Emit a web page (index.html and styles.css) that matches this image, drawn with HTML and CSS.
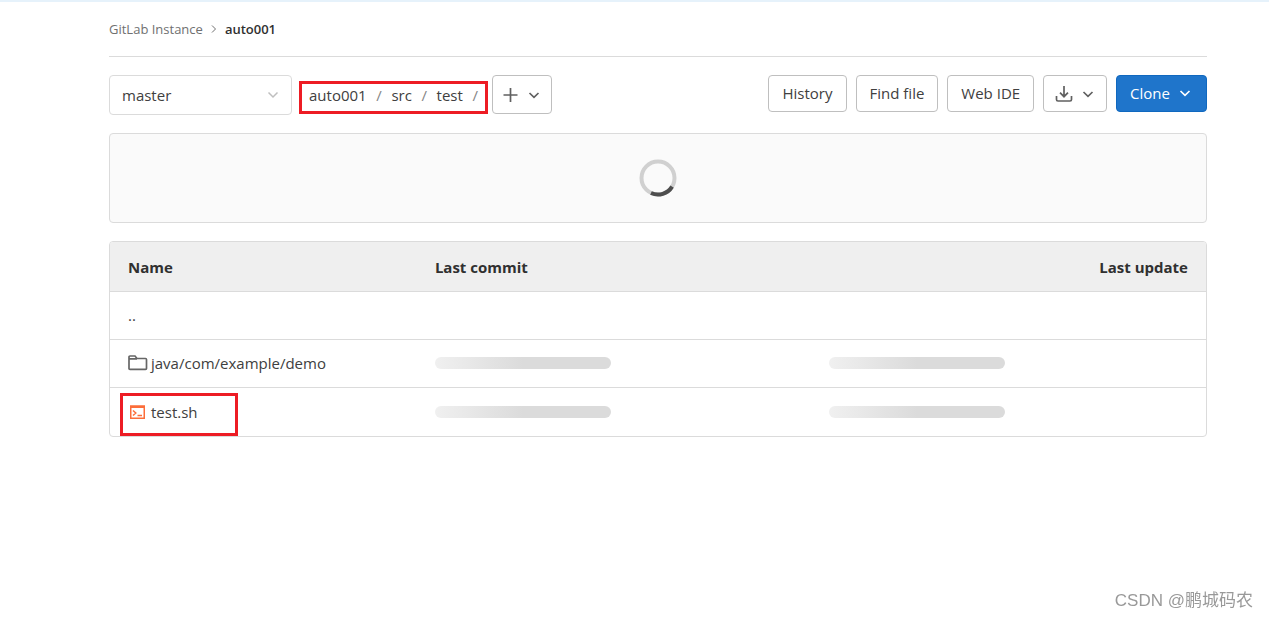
FILE: index.html
```html
<!DOCTYPE html>
<html lang="en">
<head>
<meta charset="utf-8">
<title>auto001 · GitLab</title>
<link rel="stylesheet" href="styles.css">
</head>
<body>
<main class="page">
  <nav class="breadcrumbs" aria-label="Breadcrumbs">
    <a href="#">GitLab Instance</a>
    <svg class="crumb-sep" viewBox="0 0 8 10" width="8" height="10"><path d="M2 1.5 5.5 5 2 8.500"/></svg>
    <a class="current" href="#">auto001</a>
  </nav>

  <div class="toolbar">
    <div class="branch">
      <select aria-label="Branch"><option>master</option></select>
      <svg class="chevron" viewBox="0 0 12 12" width="12" height="12"><path d="M1.500 3.500 6 8l4.500-4.500"/></svg>
    </div>
    <nav class="path" aria-label="Path">
      <a href="#">auto001</a><span>/</span><a href="#">src</a><span>/</span><a href="#">test</a><span>/</span>
    </nav>
    <button class="btn add" type="button" aria-label="Add to tree">
      <svg viewBox="0 0 16 16" width="16" height="16"><path d="M7.500 1v14M.5 8h14"/></svg>
      <svg viewBox="0 0 12 12" width="12" height="12"><path d="M1.500 4 6 8.300 10.500 4"/></svg>
    </button>
    <div class="actions">
      <button class="btn" type="button">History</button>
      <button class="btn" type="button">Find file</button>
      <button class="btn" type="button">Web IDE</button>
      <button class="btn download" type="button" aria-label="Download">
        <svg viewBox="0 0 18 18" width="18" height="18"><path d="M9 1v10.500M5 7.700l4 4 4-4M1.500 11V14.500a1.500 1.500 0 0 0 1.500 1.500h12a1.500 1.500 0 0 0 1.500-1.500V11"/></svg>
        <svg viewBox="0 0 12 12" width="12" height="12"><path d="M1.500 4 6 8.300 10.500 4"/></svg>
      </button>
      <button class="btn primary" type="button">Clone
        <svg viewBox="0 0 12 12" width="12" height="12"><path d="M1.500 4 6 8.300 10.500 4"/></svg>
      </button>
    </div>
  </div>

  <section class="commit-panel" aria-label="Loading">
    <svg viewBox="0 0 38 38" width="38" height="38">
      <circle class="ring" cx="19" cy="19" r="16.500"/>
      <path class="arc" d="M33.100 27.600A16.500 16.500 0 0 1 12 34"/>
    </svg>
  </section>

  <div class="tree">
    <table>
      <thead>
        <tr><th class="col-name">Name</th><th class="col-commit">Last commit</th><th class="col-update">Last update</th></tr>
      </thead>
      <tbody>
        <tr><td><a href="#">..</a></td><td></td><td></td></tr>
        <tr>
          <td><a class="entry" href="#"><svg class="folder" viewBox="0 0 20 16" width="20" height="16"><path d="M1 13.500V2Q1 1 2 1H7L9 3.500H17.500Q18.500 3.500 18.500 4.500V13.500Q18.500 14.300 17.500 14.300H2Q1 14.300 1 13.500ZM1 3.800H9"/></svg>java/com/example/demo</a></td>
          <td><div class="skeleton"></div></td><td><div class="skeleton"></div></td>
        </tr>
        <tr>
          <td><a class="entry marked" href="#"><svg class="shell" viewBox="0 0 20 16" width="20" height="16"><path d="M2.750 2H16.250V14.250H2.750ZM2.750 3.250H16.250M5 6.500 7.800 9 5 11.500M9.500 11.500H14"/></svg>test.sh</a></td>
          <td><div class="skeleton"></div></td><td><div class="skeleton"></div></td>
        </tr>
      </tbody>
    </table>
  </div>
</main>
<div class="watermark">CSDN @鹏城码农</div>
</body>
</html>
```
FILE: styles.css
```css
*, *::after { box-sizing: border-box; }

body {
  margin: 0;
  min-height: 100vh;
  border-top: 2px solid #e6f2fb;
  background: #fff;
  color: #404040;
  font: 15px/24px "Open Sans", "Noto Sans", sans-serif;
}

a { color: inherit; text-decoration: none; }
svg { flex: none; fill: none; stroke: currentColor; stroke-width: 1.7; }

.page { padding: 0 62px 0 109px; }

.breadcrumbs {
  display: flex;
  align-items: center;
  gap: 7px;
  height: 55px;
  border-bottom: 1px solid #dbdbdb;
  color: #707070;
  font-size: 13px;
}
.crumb-sep { stroke-width: 1; }
.current { color: #303030; font-weight: 600; }

.toolbar {
  display: flex;
  align-items: flex-start;
  margin: 18px 0;
}

.branch { position: relative; width: 183px; margin-right: 7px; }
.branch select {
  appearance: none;
  width: 100%;
  height: 40px;
  padding: 0 12px;
  border: 1px solid #dbdbdb;
  border-radius: 4px;
  background: #fff;
  color: #404040;
  font: inherit;
}
.chevron {
  position: absolute;
  top: 14px;
  right: 13px;
  color: #bfbfbf;
  stroke-width: 1.500;
  pointer-events: none;
}

.path {
  display: flex;
  justify-content: space-between;
  align-items: center;
  width: 189px;
  height: 33px;
  margin: 6px 4px 0 0;
  padding: 0 7px 6px 7px;
  border: 3px solid #ed1c24;
}
.path span { color: #868686; }

.btn {
  display: flex;
  align-items: center;
  justify-content: center;
  gap: 9px;
  height: 37px;
  padding: 0 13px 2px;
  border: 1px solid #bfbfbf;
  border-radius: 4px;
  background: #fff;
  color: #404040;
  font: inherit;
  white-space: nowrap;
}
.btn svg { color: #606060; }
.add { height: 39px; width: 60px; padding: 0 2px 0 0; }
.download { width: 64px; padding: 0 2px 0 0; }
.actions { display: flex; gap: 9px; margin-left: auto; }
.primary {
  padding: 0 15px 2px 13px;
  border-color: #1068bf;
  background: #1f75cb;
  color: #fff;
}
.primary svg { color: #fff; }

.commit-panel {
  display: flex;
  align-items: center;
  justify-content: center;
  height: 90px;
  margin-bottom: 18px;
  border: 1px solid #dbdbdb;
  border-radius: 4px;
  background: #fafafa;
}
.commit-panel svg { stroke-width: 4; }
.ring { stroke: #d0d0d0; }
.arc { stroke: #4d4d4d; }

.tree {
  overflow: hidden;
  border: 1px solid #dbdbdb;
  border-radius: 4px;
}
table { width: 100%; border-collapse: collapse; table-layout: fixed; }
th, td { height: 48px; padding: 0 18px; text-align: left; }
th {
  height: 49px;
  padding-top: 1px;
  background: #efefef;
  color: #303030;
  font-weight: 700;
}
td { border-top: 1px solid #dbdbdb; }
tbody tr:last-child td { height: 49px; }
.col-name { width: 28%; }
.col-commit { width: 36%; }
.col-update { text-align: right; }

.entry { display: flex; align-items: center; gap: 3px; }
.folder { color: #666; }
.shell { color: #fc6d3a; stroke-width: 1.500; }
.marked { position: relative; }
.marked::after {
  content: "";
  position: absolute;
  top: -7px;
  left: -8px;
  width: 118px;
  height: 43px;
  border: 3px solid #ed1c24;
}

.skeleton {
  width: 176px;
  height: 12px;
  border-radius: 6px;
  background: linear-gradient(to right, #f0f0f0, #dbdbdb 50%);
}

.watermark {
  position: fixed;
  right: 16px;
  bottom: 6px;
  color: #999;
  font: 17px/24px "Liberation Sans", "Noto Sans CJK SC", sans-serif;
}
```
